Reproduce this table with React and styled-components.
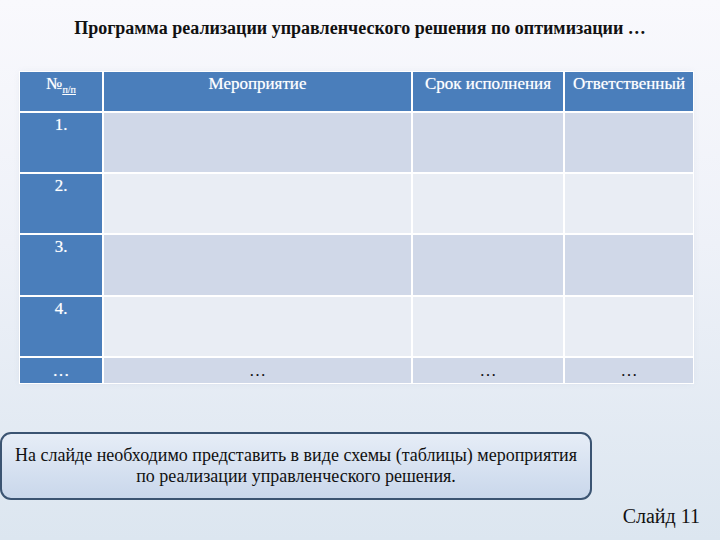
import React from "react";
import styled, { createGlobalStyle } from "styled-components";

const GlobalStyle = createGlobalStyle`
    html, body {
        margin: 0;
        padding: 0;
    }
`;

const serif = `"Liberation Serif", "DejaVu Serif", "Times New Roman", serif`;

// the whole slide, light gradient like the template background
const Slide = styled.div`
    width: 720px;
    height: 540px;
    overflow: hidden;
    box-sizing: border-box;
    font-family: ${serif};
    background: linear-gradient(180deg, #f9f9fd 0%, #eef1f8 45%, #dce6f0 100%);
    display: flex;
    flex-direction: column;
`;

const Title = styled.h1`
    margin: 0;
    padding-top: 18px;
    height: 72px;
    box-sizing: border-box;
    text-align: center;
    font-family: ${serif};
    font-size: 18px;
    font-weight: bold;
    color: #111;
`;

const Grid = styled.div`
    margin-left: 20px;
    width: 673px;
    display: grid;
    grid-template-columns: 82px 307px 150px 128px;
    grid-template-rows: 39px 59px 59px 60px 59px 25px;
    gap: 2px;
    background: #ffffff;
    box-shadow: 0 0 0 1px #ffffff, 0 0 6px rgba(120, 140, 170, 0.12);
`;

const tones = {
    head: "#4a7ebb",
    num: "#4a7ebb",
    odd: "#d0d8e8",
    even: "#e9edf4",
};

// cells are plain blocks so inline sub/superscripts still work inside
const Cell = styled.div`
    background: ${({ $tone }) => tones[$tone]};
    color: ${({ $tone }) => ($tone === "head" || $tone === "num" ? "#ffffff" : "#111111")};
    text-shadow: ${({ $tone }) => ($tone === "head" || $tone === "num" ? "0 0 1px rgba(255,255,255,0.6)" : "none")};
    font-family: ${serif};
    font-size: 17px;
    text-align: center;
    padding-top: ${({ $middle }) => ($middle ? "0" : "3px")};
    line-height: ${({ $middle }) => ($middle ? "25px" : "1")};
    box-sizing: border-box;
    white-space: nowrap;
`;

const Sub = styled.span`
    font-size: 10px;
    vertical-align: -4px;
    text-decoration: underline;
`;

const NoteBox = styled.div`
    margin-top: 49px;
    width: 592px;
    height: 68px;
    box-sizing: border-box;
    border: 2px solid #3b5472;
    border-radius: 11px;
    background: linear-gradient(180deg, #e6edf7 0%, #c9d7eb 100%);
    display: flex;
    flex-direction: column;
    justify-content: center;
    align-items: center;
    font-family: ${serif};
    font-size: 18px;
    line-height: 21px;
    color: #111;
    text-align: center;
`;

const SlideNum = styled.div`
    margin-top: 5px;
    padding-right: 20px;
    text-align: right;
    font-family: ${serif};
    font-size: 20px;
    color: #111;
`;

const rows = [
    { n: "1.", tone: "odd" },
    { n: "2.", tone: "even" },
    { n: "3.", tone: "odd" },
    { n: "4.", tone: "even" },
];

function App() {
    return (
        <Slide>
            <GlobalStyle />
            <Title>Программа реализации управленческого решения по оптимизации …</Title>
            <Grid>
                <Cell $tone="head">№<Sub>п/п</Sub></Cell>
                <Cell $tone="head">Мероприятие</Cell>
                <Cell $tone="head">Срок исполнения</Cell>
                <Cell $tone="head">Ответственный</Cell>
                {rows.map((r) => (
                    <React.Fragment key={r.n}>
                        <Cell $tone="num">{r.n}</Cell>
                        <Cell $tone={r.tone} />
                        <Cell $tone={r.tone} />
                        <Cell $tone={r.tone} />
                    </React.Fragment>
                ))}
                <Cell $tone="num" $middle>…</Cell>
                <Cell $tone="odd" $middle>…</Cell>
                <Cell $tone="odd" $middle>…</Cell>
                <Cell $tone="odd" $middle>…</Cell>
            </Grid>
            <NoteBox>
                <div>На слайде необходимо представить в виде схемы (таблицы) мероприятия</div>
                <div>по реализации управленческого решения.</div>
            </NoteBox>
            <SlideNum>Слайд 11</SlideNum>
        </Slide>
    );
}

export default App;
